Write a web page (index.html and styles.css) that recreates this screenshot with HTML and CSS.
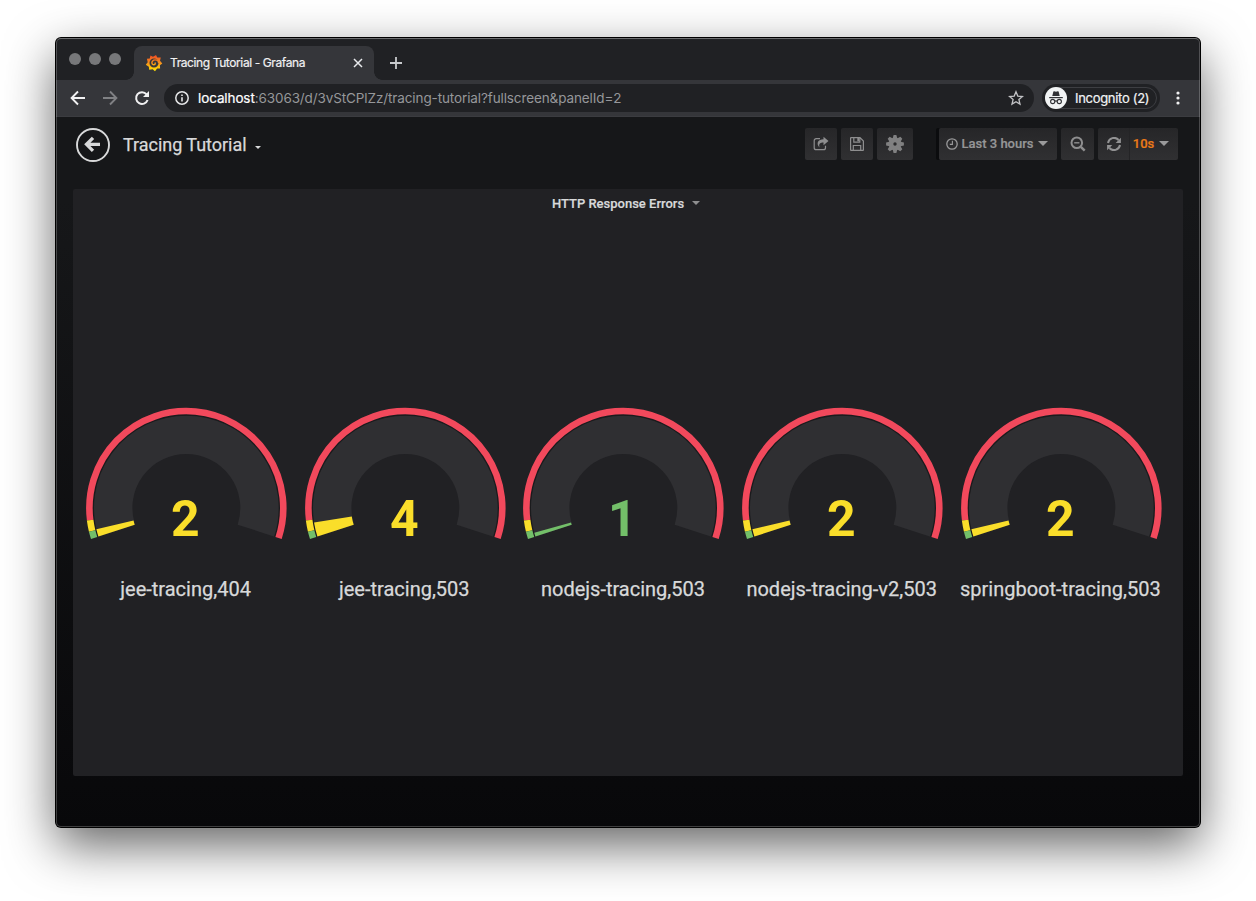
FILE: index.html
```html
<!DOCTYPE html>
<html lang="en">
<head>
<meta charset="utf-8">
<title>Tracing Tutorial - Grafana</title>
<link rel="stylesheet" href="styles.css">
</head>
<body>
<div class="window">
  <header class="tabstrip">
    <div class="lights"><i></i><i></i><i></i></div>
    <div class="tab">
      <svg class="favicon" width="18" height="18" viewBox="-9 -9 18 18">
        <defs><linearGradient id="flame" gradientUnits="userSpaceOnUse" x1="0" y1="-8" x2="0" y2="8"><stop offset="0" stop-color="#f04a24"/><stop offset=".45" stop-color="#f68a1e"/><stop offset="1" stop-color="#ffe600"/></linearGradient></defs>
        <path fill="url(#flame)" fill-rule="evenodd" d="M-3.600-7.400L-1-6.300 2-8 3.300-5.400 6.800-5.400 6-2.300 8.300.5 5.900 2.200 6.100 5.600 3.100 5.600 1 8.200-1.300 6.200-4.800 6.800-5.200 3.700-8.200 1.800-6.300-.8-7.100-4.200-4.200-4.600zM0-4.500A4.500 4.500 0 1 0 4.500 0A4.500 4.500 0 0 0 0-4.500z"/>
        <path fill="none" stroke="url(#flame)" stroke-width="1.400" d="M4.700 0C4.500-2.200 2.700-3.200 1-3.100-1-3-2.300-1.500-2.100 0-1.900 1.400-.6 2 .4 1.700 1.400 1.300 1.500.1.700-.4"/>
      </svg>
      <span class="tab-title">Tracing Tutorial - Grafana</span>
      <svg class="tab-close" width="10" height="10" viewBox="0 0 10 10"><path d="M1 1l8 8M9 1l-8 8" stroke="#e8eaed" stroke-width="1.500"/></svg>
    </div>
    <svg class="newtab" width="14" height="14" viewBox="0 0 14 14"><path d="M7 1v12M1 7h12" stroke="#c8cacd" stroke-width="1.800"/></svg>
  </header>

  <div class="toolbar">
    <svg class="nav-back" width="16" height="16" viewBox="0 0 16 16"><path d="M15 8H2M8 1.500L1.600 8 8 14.500" fill="none" stroke="#f1f1f2" stroke-width="1.900"/></svg>
    <svg class="nav-forward" width="16" height="16" viewBox="0 0 16 16"><path d="M1 8h13M8 1.500L14.400 8 8 14.500" fill="none" stroke="#808184" stroke-width="1.900"/></svg>
    <svg class="nav-reload" width="16" height="16" viewBox="0 0 16 16"><path d="M13.600 10A5.900 5.900 0 1 1 12.600 4.300" fill="none" stroke="#f1f1f2" stroke-width="2"/><path d="M15 1v6H9z" fill="#f1f1f2"/></svg>
    <div class="omnibox">
      <svg width="14" height="14" viewBox="0 0 14 14"><circle cx="7" cy="7" r="6.200" fill="none" stroke="#e4e5e7" stroke-width="1.500"/><path d="M7 6.200v4.300M7 3.400v1.700" stroke="#e4e5e7" stroke-width="1.600"/></svg>
      <span class="url"><b>localhost</b>:63063/d/3vStCPlZz/tracing-tutorial?fullscreen&amp;panelId=2</span>
      <svg class="star" width="16" height="16" viewBox="0 0 16 16"><path d="M8 1.800l1.800 4.300 4.700.4-3.600 3 1.100 4.600L8 11.700l-4 2.400 1.100-4.600-3.600-3 4.700-.4z" fill="none" stroke="#c2c3c6" stroke-width="1.300"/></svg>
    </div>
    <div class="incognito">
      <svg width="22" height="22" viewBox="0 0 22 22"><circle cx="11" cy="11" r="11" fill="#f1f3f4"/><path d="M7.300 8.900l1-4.200q.2-.7.900-.5l1.800.5 1.800-.5q.7-.2.900.5l1 4.200z" fill="#303135"/><path d="M4.200 10.600h13.600" stroke="#303135" stroke-width="1.200"/><g fill="none" stroke="#303135" stroke-width="1.100"><circle cx="7.700" cy="14.500" r="2.100"/><circle cx="14.300" cy="14.500" r="2.100"/><path d="M9.800 14.200q1.200-.7 2.400 0"/></g></svg>
      <span>Incognito (2)</span>
    </div>
    <svg class="kebab" width="4" height="14" viewBox="0 0 4 14"><g fill="#f1f1f2"><circle cx="2" cy="2" r="1.600"/><circle cx="2" cy="7" r="1.600"/><circle cx="2" cy="12" r="1.600"/></g></svg>
  </div>

  <main class="dashboard">
    <nav class="navbar">
      <svg class="back" width="34" height="34" viewBox="0 0 34 34"><circle cx="17" cy="17" r="16" fill="none" stroke="#d8d9da" stroke-width="1.900"/><path d="M24 16.300H12M17 9.800l-6.500 6.500 6.500 6.500" fill="none" stroke="#d8d9da" stroke-width="3.300"/></svg>
      <span class="title">Tracing Tutorial</span>
      <i class="caret caret-title"></i>
      <div class="actions">
        <button class="btn w32"><svg width="16" height="16" viewBox="0 0 16 16"><path d="M7 2.700H3.200A2 2 0 0 0 1.200 4.700v7A2 2 0 0 0 3.200 13.700h7.300a2 2 0 0 0 2-2V9.800" fill="none" stroke="#8e8e8f" stroke-width="1.200"/><path d="M10.500.7L15.500 5l-5 4.200V6.600C7.500 6.600 5.500 7.500 6.500 11.500 2.800 7.500 5 3.300 10.500 3.300z" fill="#8e8e8f"/></svg></button>
        <button class="btn w32"><svg width="16" height="16" viewBox="0 0 16 16"><g fill="none" stroke="#8e8e8f" stroke-width="1.200"><path d="M1.600 2.100q0-.5.500-.5H11L14.400 5v8.900q0 .5-.5.500H2.100q-.5 0-.5-.5zM4.300 14V9.500h7.400V14M4.800 1.800v4.400h6V1.800"/></g><path d="M8.300 2h1.800v3.300H8.300z" fill="#8e8e8f"/></svg></button>
        <button class="btn w36"><svg width="18" height="18" viewBox="-9 -9 18 18"><g fill="#808081"><circle r="6.500"/><path id="tooth" d="M-1.400-8.900h2.800l.9 3.400h-4.600z"/><use href="#tooth" transform="rotate(45)"/><use href="#tooth" transform="rotate(90)"/><use href="#tooth" transform="rotate(135)"/><use href="#tooth" transform="rotate(180)"/><use href="#tooth" transform="rotate(225)"/><use href="#tooth" transform="rotate(270)"/><use href="#tooth" transform="rotate(315)"/></g><circle r="1.700" fill="#2b2b2d"/></svg></button>
        <button class="btn time"><svg width="12" height="12" viewBox="0 0 12 12"><circle cx="6" cy="6" r="5.200" fill="none" stroke="#9a9a9b" stroke-width="1.300"/><path d="M6.400 2.800v3.600H3.800" fill="none" stroke="#9a9a9b" stroke-width="1.100"/></svg><span>Last 3 hours</span><i class="caret"></i></button>
        <button class="btn w33"><svg width="16" height="16" viewBox="0 0 16 16"><circle cx="6.800" cy="6.800" r="5.300" fill="none" stroke="#8e8e8f" stroke-width="2"/><path d="M10.800 10.800l3.900 3.900" stroke="#8e8e8f" stroke-width="2.500"/><path d="M4.200 6.800h5.200" stroke="#8e8e8f" stroke-width="1.400"/></svg></button>
        <div class="group">
          <button class="btn refresh"><svg width="14" height="14" viewBox="0 0 14 14"><path d="M1 6A6.100 6.100 0 0 1 11.600 3M13 8A6.100 6.100 0 0 1 2.400 11" fill="none" stroke="#929293" stroke-width="2"/><path d="M13.900.7v5.200H8.700zM.1 13.300V8.100h5.200z" fill="#929293"/></svg></button>
          <button class="btn interval"><span>10s</span><i class="caret"></i></button>
        </div>
      </div>
    </nav>

    <section class="panel">
      <h2 class="panel-title">HTTP Response Errors<i class="caret caret-panel"></i></h2>
      <svg class="defs" width="0" height="0"><defs>
        <g id="dial" fill="none">
          <path d="M-69.810 22.680A73.400 73.400 0 1 1 69.810 22.680" stroke="#2f2f32" stroke-width="38.800"/>
          <path d="M-88.450 28.740A93 93 0 1 1 88.450 28.740" stroke="#1b1b1d" stroke-width="1.200"/>
          <path d="M-96.240 12.160A97 97 0 1 1 92.250 29.970" stroke="#f2495c" stroke-width="6.600"/>
          <path d="M-94.250 22.940A97 97 0 0 1-96.240 12.160" stroke="#fade2a" stroke-width="6.600"/>
          <path d="M-92.250 29.970A97 97 0 0 1-94.250 22.940" stroke="#73bf69" stroke-width="6.600"/>
        </g>
        <path id="two" d="M-69.810 22.680A73.400 73.400 0 0 1-71.430 16.890" fill="none" stroke="#fade2a" stroke-width="38.200"/>
      </defs></svg>
      <div class="gauges">
        <figure class="gauge"><svg viewBox="-109.400 -101 218.800 150"><use href="#dial"/><use href="#two"/><text class="value yellow" x="-1" y="28.500">2</text></svg><figcaption>jee-tracing,404</figcaption></figure>
        <figure class="gauge"><svg viewBox="-109.400 -101 218.800 150"><use href="#dial"/><path d="M-69.810 22.680A73.400 73.400 0 0 1-72.480 11.610" fill="none" stroke="#fade2a" stroke-width="38.200"/><text class="value yellow" x="-1" y="28.500">4</text></svg><figcaption>jee-tracing,503</figcaption></figure>
        <figure class="gauge"><svg viewBox="-109.400 -101 218.800 150"><use href="#dial"/><path d="M-69.810 22.680A73.400 73.400 0 0 1-70.730 19.620" fill="none" stroke="#73bf69" stroke-width="38.200"/><text class="value green" x="-1" y="28.500">1</text></svg><figcaption>nodejs-tracing,503</figcaption></figure>
        <figure class="gauge"><svg viewBox="-109.400 -101 218.800 150"><use href="#dial"/><use href="#two"/><text class="value yellow" x="-1" y="28.500">2</text></svg><figcaption>nodejs-tracing-v2,503</figcaption></figure>
        <figure class="gauge"><svg viewBox="-109.400 -101 218.800 150"><use href="#dial"/><use href="#two"/><text class="value yellow" x="-1" y="28.500">2</text></svg><figcaption>springboot-tracing,503</figcaption></figure>
      </div>
    </section>
  </main>
</div>
</body>
</html>
```
FILE: styles.css
```css
* { box-sizing: border-box; }
body { margin: 0; height: 901px; padding: 38px 56px; background: #fff; overflow: hidden; font-family: Roboto, sans-serif; }
svg { display: block; flex: none; }
button { font: inherit; border: 0; padding: 0; margin: 0; }

.window { position: relative; width: 1144px; height: 789px; border-radius: 5px; background: #202124; box-shadow: 0 0 0 1px #000, 0 18px 50px rgba(0, 0, 0, .62); display: flex; flex-direction: column; }
.window::after { content: ""; position: absolute; inset: 0; border: 1px solid rgba(255, 255, 255, .22); border-top-color: rgba(255, 255, 255, .35); border-radius: 5px; pointer-events: none; }

.tabstrip { height: 42px; display: flex; align-items: flex-end; padding-left: 13px; font-family: Inter, sans-serif; }
.lights { display: flex; gap: 8px; width: 65px; padding-bottom: 15px; }
.lights i { width: 12px; height: 12px; border-radius: 50%; background: #77787a; }
.tab { position: relative; width: 240px; height: 34px; background: #35363a; border-radius: 8px 8px 0 0; display: flex; align-items: center; padding: 0 11px; color: #f1f1f2; font-size: 12px; }
.tab::before, .tab::after { content: ""; position: absolute; bottom: 0; width: 8px; height: 8px; }
.tab::before { left: -8px; background: radial-gradient(circle at 0 0, transparent 7.500px, #35363a 8px); }
.tab::after { right: -8px; background: radial-gradient(circle at 100% 0, transparent 7.500px, #35363a 8px); }
.tab-title { margin-left: 7px; padding-bottom: 1px; letter-spacing: -.4px; white-space: nowrap; -webkit-text-stroke: .2px; }
.tab-close { margin-left: auto; }
.newtab { margin: 0 0 10px 15px; }

.toolbar { height: 37px; background: #35363a; border-bottom: 1px solid #3b3c40; display: flex; align-items: center; padding: 0 20px 0 14px; font-family: Inter, sans-serif; }
.nav-forward, .nav-reload { margin-left: 16px; }
.omnibox { width: 870px; height: 28px; margin-left: 14px; border-radius: 14px; background: #202124; display: flex; align-items: center; padding: 0 10px 0 11px; }
.url { margin-left: 9px; font-size: 13.500px; letter-spacing: -.11px; color: #96979a; white-space: nowrap; }
.url b { font-weight: 400; color: #fff; -webkit-text-stroke: .2px; }
.star { margin-left: auto; }
.incognito { position: relative; width: 118px; height: 28px; margin-left: 8px; border-radius: 14px; background: #202124; display: flex; align-items: center; padding-left: 3px; color: #f1f3f4; font-size: 13px; white-space: nowrap; }
.incognito::after { content: ""; position: absolute; inset: 3px; border: 1px solid #3d3e42; border-radius: 11px; }
.incognito svg { position: relative; z-index: 1; }
.incognito span { margin-left: 8px; letter-spacing: -.3px; -webkit-text-stroke: .2px; }
.kebab { margin-left: auto; }

.dashboard { flex: 1; background: linear-gradient(#161719 0, #161719 12%, #08080a 100%); border-radius: 0 0 5px 5px; padding: 0 17px; }
.navbar { height: 72px; display: flex; align-items: center; padding: 0 5px 17px 3px; }
.title { margin-left: 13px; font-size: 18px; color: #d8d9da; letter-spacing: -.03px; white-space: nowrap; -webkit-text-stroke: .25px; }
.caret { display: block; border: 5px solid transparent; border-top-color: #9a9a9b; border-bottom: 0; }
.caret-title { border-width: 3.500px; border-bottom: 0; border-top-color: #d8d9da; margin: 5px 0 0 8px; }
.actions { margin-left: auto; padding-bottom: 2px; display: flex; gap: 4px; }
.btn { height: 32px; background: linear-gradient(#262628, #303032); border-radius: 2px; display: flex; align-items: center; justify-content: center; color: #969697; font-size: 13px; font-weight: 500; -webkit-text-stroke: .2px; }
.w32 { width: 32px; }
.w33 { width: 33px; }
.w36 { width: 36px; }
.time { width: 118px; margin-left: 22px; gap: 3px; padding-right: 2px; box-shadow: -3px 0 #0b0c0e; }
.time span { margin-right: 1px; white-space: nowrap; }
.group { display: flex; }
.refresh { width: 32px; border-radius: 2px 0 0 2px; border-right: 1px solid #242426; }
.interval { width: 48px; gap: 5px; padding-right: 6px; color: #eb7b18; border-radius: 0 2px 2px 0; }

.panel { height: 587px; background: #212124; border-radius: 2px; padding-left: 4px; }
.panel-title { margin: 0; height: 28px; display: flex; align-items: center; justify-content: center; padding-right: 8px; font-size: 13px; font-weight: 500; color: #d8d9da; -webkit-text-stroke: .2px; }
.caret-panel { border-width: 4px; border-bottom: 0; margin-left: 8px; border-top-color: #8e8e8f; }
.defs { height: 0; }
.gauges { display: flex; padding-top: 189.500px; }
.gauge { width: 218.700px; margin: 0; flex: none; }
.gauge svg { width: 218.700px; height: 150px; }
.gauge figcaption { margin-top: 20px; height: 24px; line-height: 24px; padding-right: 1.500px; text-align: center; font-size: 20px; color: #d8d9da; white-space: nowrap; -webkit-text-stroke: .25px; }
.value { font-family: Roboto, sans-serif; font-size: 50px; font-weight: 700; text-anchor: middle; }
.yellow { fill: #fade2a; }
.green { fill: #73bf69; }
```
